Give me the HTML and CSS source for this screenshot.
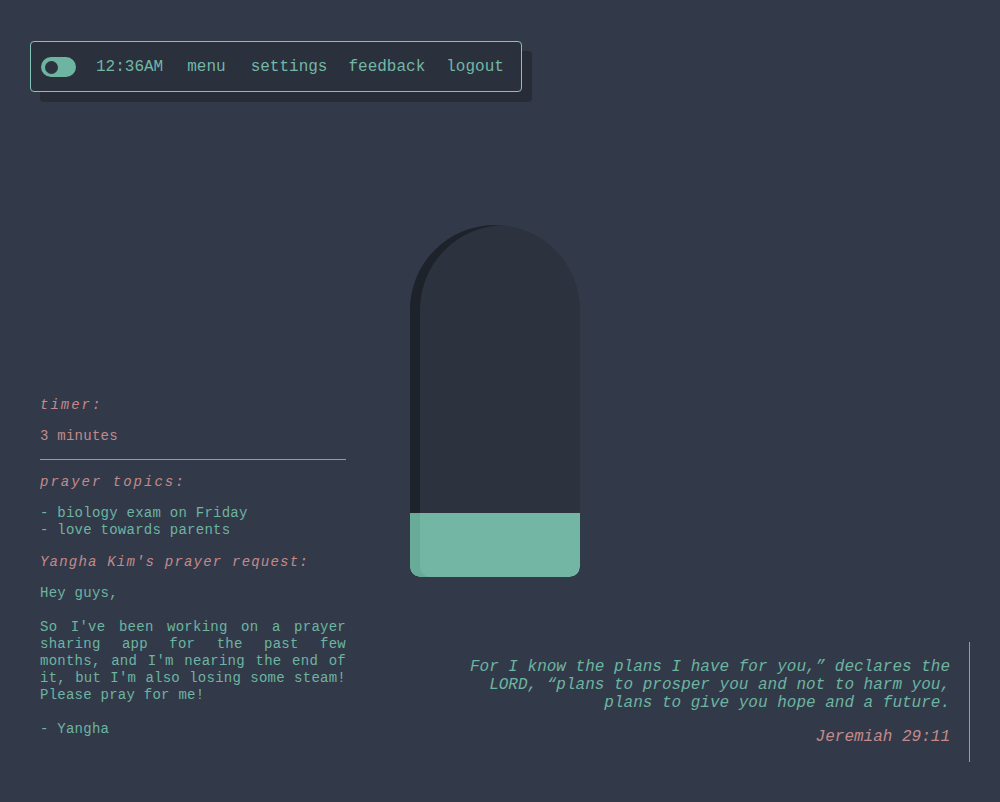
FILE: index.html
```html
<!DOCTYPE html>
<html lang="en">
<head>
<meta charset="utf-8">
<title>Prayer</title>
<link rel="stylesheet" href="styles.css">
</head>
<body>
<div class="page">
  <nav class="topbar">
    <span class="toggle"><span class="knob"></span></span>
    <ul class="items">
      <li class="clock">12:36AM</li>
      <li class="menu">menu</li>
      <li>settings</li>
      <li>feedback</li>
      <li>logout</li>
    </ul>
  </nav>
  <main class="stage">
    <section class="info">
      <h2 class="label wide">timer:</h2>
      <p class="line">3 minutes</p>
      <hr class="rule">
      <h2 class="label wide">prayer topics:</h2>
      <ul class="topics">
        <li>- biology exam on Friday</li>
        <li>- love towards parents</li>
      </ul>
      <h2 class="label mid">Yangha Kim's prayer request:</h2>
      <div class="request">
        <p>Hey guys,</p>
        <p class="just">So I've been working on a prayer sharing app for the past few months, and I'm nearing the end of it, but I'm also losing some steam! Please pray for me!</p>
        <p>- Yangha</p>
      </div>
    </section>
    <div class="capsule">
      <div class="fill"></div>
    </div>
    <blockquote class="verse">
      <p class="verse-text">For I know the plans I have for you,” declares the LORD, “plans to prosper you and not to harm you, plans to give you hope and a future.</p>
      <p class="verse-ref">Jeremiah 29:11</p>
    </blockquote>
  </main>
</div>
</body>
</html>
```
FILE: styles.css
```css
* { box-sizing: border-box; }
html, body {
  margin: 0;
  padding: 0;
  background: #323a4a;
}
body {
  font-family: "Liberation Mono", "Courier New", monospace;
  color: #6db4a1;
}
.page {
  height: 802px;
  padding: 41px 30px 40px 30px;
  display: flex;
  flex-direction: column;
}
.topbar {
  width: 492px;
  height: 51px;
  display: flex;
  align-items: center;
  gap: 20px;
  padding: 1px 18px 0 10px;
  background: #2a303c;
  border: 1px solid #86c3b7;
  border-radius: 4px;
  box-shadow: 10px 10px 0 #272c37;
  font-size: 16px;
  flex: none;
}
.toggle {
  width: 35px;
  height: 20px;
  border-radius: 10px;
  background: #6db5a0;
  display: flex;
  align-items: center;
  padding-left: 4px;
  flex: none;
}
.knob {
  width: 13px;
  height: 13px;
  border-radius: 50%;
  background: #2c323e;
}
.items {
  list-style: none;
  margin: 0;
  padding: 0;
  display: flex;
  gap: 21px;
  line-height: 18px;
  color: #73b7a6;
}
.items .clock { margin-right: 3px; }
.items .menu { margin-right: 4px; }
.stage {
  flex: 1;
  margin-top: 133px;
  display: grid;
  grid-template-columns: 316px 234px minmax(0, 1fr);
  grid-template-rows: 1fr;
}
.info {
  grid-row: 1;
  grid-column: 1;
  align-self: end;
  margin: 0 0 24px 10px;
  width: 306px;
  font-size: 14px;
  line-height: 17px;
  letter-spacing: 0.25px;
}
.label {
  margin: 0 0 14px;
  font-size: 14px;
  font-weight: normal;
  font-style: italic;
  color: #c48a8b;
}
.label.wide { letter-spacing: 2px; }
.label.mid { letter-spacing: 1.2px; }
.line {
  margin: 0 0 14px;
  color: #c48a8b;
}
.rule {
  margin: 0 0 14px;
  border: 0;
  border-top: 1px solid #c0899a;
  height: 0;
}
.topics {
  list-style: none;
  margin: 0 0 15px;
  padding: 0;
}
.request p { margin: 0 0 17px; }
.request p:last-child { margin-bottom: 0; }
.request .just { text-align: justify; }
.capsule {
  grid-row: 1;
  grid-column: 2;
  align-self: start;
  margin-left: 64px;
  width: 170px;
  height: 352px;
  border-radius: 85px 85px 10px 10px;
  background: #2c333f;
  box-shadow: inset 10px 0 0 #1e232b;
  overflow: hidden;
  display: flex;
  flex-direction: column;
  justify-content: flex-end;
}
.fill {
  height: 64px;
  background: #73b6a3;
  box-shadow: inset 10px 0 0 #68ab97;
  border-radius: 0 0 10px 10px;
}
.verse {
  grid-row: 1;
  grid-column: 2 / 4;
  align-self: end;
  justify-self: end;
  margin: 0;
  padding: 16px 19px 16px 0;
  border-right: 1px solid #c0899a;
  text-align: right;
  font-size: 16px;
  line-height: 18px;
  font-style: italic;
}
.verse-text {
  margin: 0 0 16px;
  width: 482px;
  margin-left: auto;
}
.verse-ref {
  margin: 0;
  color: #c48a8b;
}
```
